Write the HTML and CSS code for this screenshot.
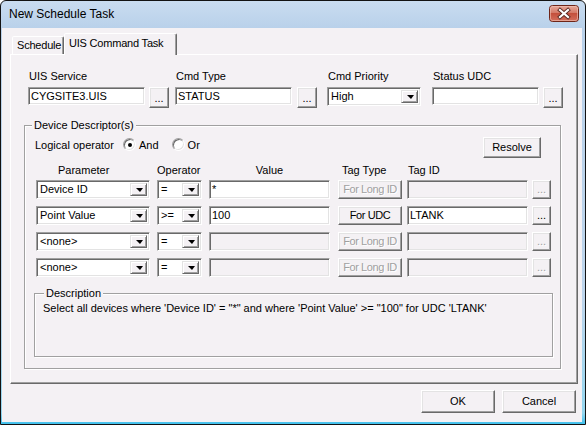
FILE: index.html
```html
<!DOCTYPE html>
<html>
<head>
<meta charset="utf-8">
<link rel="stylesheet" href="styles.css">
</head>
<body>
<div class="window">
  <div class="titlebar">
    <span class="title">New Schedule Task</span>
    <div class="close">
      <svg width="30" height="17" viewBox="0 0 30 17">
        <defs>
          <linearGradient id="cg" x1="0" y1="0" x2="0" y2="1">
            <stop offset="0" stop-color="#e8ab9c"/>
            <stop offset="0.45" stop-color="#d47a68"/>
            <stop offset="0.5" stop-color="#c4503c"/>
            <stop offset="1" stop-color="#d4705e"/>
          </linearGradient>
        </defs>
        <rect x="0.5" y="0.5" width="29" height="16" rx="3" fill="url(#cg)" stroke="#6e2518"/>
        <rect x="1.5" y="1.5" width="27" height="14" rx="2" fill="none" stroke="#f0c4b8" stroke-opacity="0.6"/>
        <path d="M11 5 L19 12 M19 5 L11 12" stroke="#5a2a22" stroke-width="4" stroke-linecap="square"/>
        <path d="M11 5 L19 12 M19 5 L11 12" stroke="#ffffff" stroke-width="2.2" stroke-linecap="square"/>
      </svg>
    </div>
  </div>
  <div class="client">
    <div class="tabs">
      <div class="tab">Schedule</div>
      <div class="tab active">UIS Command Task</div>
    </div>
    <div class="panel">
      <div class="toprow">
        <div class="field f1">
          <label>UIS Service</label>
          <div class="ctl"><div class="edit w117">CYGSITE3.UIS</div><div class="btn dots tall ml4">...</div></div>
        </div>
        <div class="field f2">
          <label>Cmd Type</label>
          <div class="ctl"><div class="edit w117">STATUS</div><div class="btn dots tall ml5">...</div></div>
        </div>
        <div class="field f3">
          <label>Cmd Priority</label>
          <div class="ctl"><div class="combo w94"><span class="ctext">High</span><span class="arrow"></span></div></div>
        </div>
        <div class="field f4">
          <label>Status UDC</label>
          <div class="ctl"><div class="edit w107"></div><div class="btn dots tall ml4">...</div></div>
        </div>
      </div>

      <fieldset class="group devices">
        <legend>Device Descriptor(s)</legend>
        <div class="logic">
          <div class="logic-left">
            <span class="lbl">Logical operator</span>
            <span class="radio on"></span><span class="rtext">And</span>
            <span class="radio"></span><span class="rtext">Or</span>
          </div>
          <div class="btn resolve">Resolve</div>
        </div>

        <div class="hdr">
          <span class="c-param h-param">Parameter</span>
          <span class="c-op">Operator</span>
          <span class="c-val h-val">Value</span>
          <span class="c-type h-type">Tag Type</span>
          <span class="c-id h-id">Tag ID</span>
        </div>

        <div class="rows">
          <div class="row">
            <div class="combo c-param"><span class="ctext">Device ID</span><span class="arrow"></span></div>
            <div class="combo c-op"><span class="ctext">=</span><span class="arrow"></span></div>
            <div class="edit c-val">*</div>
            <div class="btn c-type disabled">For Long ID</div>
            <div class="edit c-id off"></div>
            <div class="btn dots c-dots disabled">...</div>
          </div>
          <div class="row">
            <div class="combo c-param"><span class="ctext">Point Value</span><span class="arrow"></span></div>
            <div class="combo c-op"><span class="ctext">&gt;=</span><span class="arrow"></span></div>
            <div class="edit c-val">100</div>
            <div class="btn c-type">For UDC</div>
            <div class="edit c-id">LTANK</div>
            <div class="btn dots c-dots">...</div>
          </div>
          <div class="row">
            <div class="combo c-param"><span class="ctext">&lt;none&gt;</span><span class="arrow"></span></div>
            <div class="combo c-op"><span class="ctext">=</span><span class="arrow"></span></div>
            <div class="edit c-val off"></div>
            <div class="btn c-type disabled">For Long ID</div>
            <div class="edit c-id off"></div>
            <div class="btn dots c-dots disabled">...</div>
          </div>
          <div class="row">
            <div class="combo c-param"><span class="ctext">&lt;none&gt;</span><span class="arrow"></span></div>
            <div class="combo c-op"><span class="ctext">=</span><span class="arrow"></span></div>
            <div class="edit c-val off"></div>
            <div class="btn c-type disabled">For Long ID</div>
            <div class="edit c-id off"></div>
            <div class="btn dots c-dots disabled">...</div>
          </div>
        </div>

        <fieldset class="group desc">
          <legend>Description</legend>
          <div class="desc-text">Select all devices where 'Device ID' = "*" and where 'Point Value' &gt;= "100" for UDC 'LTANK'</div>
        </fieldset>
      </fieldset>
    </div>
    <div class="buttons">
      <div class="btn big">OK</div>
      <div class="btn big">Cancel</div>
    </div>
  </div>
</div>
</body>
</html>
```

FILE: styles.css
```css
* { box-sizing: border-box; }

body {
  margin: 0;
  background: #ffffff;
  font-family: "Liberation Sans", Arial, sans-serif;
  font-size: 11px;
  color: #000;
}

.window {
  width: 586px;
  height: 425px;
  border: 1px solid #121212;
  border-radius: 6px 6px 0 0;
  padding: 0 3px 2px 1px;
  background: linear-gradient(to bottom, #c9dcf0 0, #b9d1ea 27px, #bdd5ec 300px, #94d6ef 412px, #3fc0ec 423px);
  display: flex;
  flex-direction: column;
  overflow: hidden;
}

.titlebar {
  height: 27px;
  flex: none;
  display: flex;
  align-items: flex-start;
  padding-left: 7px;
}

.title {
  flex: 1;
  font-size: 12px;
  line-height: 14px;
  margin-top: 6px;
}

.close {
  width: 30px;
  height: 17px;
  margin-top: 4px;
  margin-right: 3px;
}
.close svg { display: block; }

.client {
  flex: 1;
  background: #f4f1f4;
  display: flex;
  flex-direction: column;
  padding: 5px 4px 0 8px;
}

/* tabs */
.tabs {
  display: flex;
  align-items: flex-end;
  height: 21px;
  padding-left: 2px;
}

.tab {
  height: 18px;
  padding: 0 3px;
  line-height: 16px;
  border: 1px solid;
  border-bottom: none;
  border-color: #ffffff #696969 transparent #ffffff;
  box-shadow: inset -1px 0 0 #a0a0a0;
  border-radius: 2px 2px 0 0;
  background: #f4f1f4;
  white-space: nowrap;
  letter-spacing: -0.2px;
}
.tab:first-child { width: 52px; padding-left: 4px; }

.tab.active {
  width: 113px;
  height: 22px;
  margin-bottom: -1px;
  position: relative;
  z-index: 1;
  line-height: 18px;
  padding-left: 4px;
}

.panel {
  width: 568px;
  height: 330px;
  border: 1px solid;
  border-color: #ffffff #696969 #696969 #ffffff;
  box-shadow: inset -1px -1px 0 #a0a0a0;
  background: #f4f1f4;
}

/* top row */
.toprow {
  display: flex;
  align-items: flex-start;
  padding: 15px 0 0 17px;
}
.field { display: flex; flex-direction: column; }
.field label {
  height: 13px;
  line-height: 13px;
  margin-bottom: 4px;
  padding-left: 1px;
}
.ctl { display: flex; align-items: flex-start; }
.f1 { margin-right: 6px; }
.f2 { margin-right: 10px; }
.f3 { margin-right: 11px; }

.w117 { width: 117px; }
.w107 { width: 107px; }
.w94 { width: 94px; }
.ml4 { margin-left: 4px; }
.ml5 { margin-left: 5px; }

/* controls */
.edit {
  height: 19px;
  background: #ffffff;
  border: 1px solid;
  border-color: #a0a0a0 #ffffff #ffffff #a0a0a0;
  box-shadow: inset 1px 1px 0 #696969, inset -1px -1px 0 #e3e3e3;
  padding: 0 2px;
  line-height: 17px;
  white-space: nowrap;
  overflow: hidden;
}
.toprow .edit { height: 18px; line-height: 16px; }
.edit.off { background: #f4f1f4; }

.combo {
  height: 19px;
  display: flex;
  align-items: stretch;
  background: #ffffff;
  border: 1px solid;
  border-color: #a0a0a0 #ffffff #ffffff #a0a0a0;
  box-shadow: inset 1px 1px 0 #696969, inset -1px -1px 0 #e3e3e3;
  padding: 2px;
}
.ctext {
  flex: 1;
  line-height: 13px;
  padding-left: 1px;
  white-space: nowrap;
  overflow: hidden;
}
.arrow {
  width: 17px;
  flex: none;
  background: #f4f1f4;
  border: 1px solid;
  border-color: #e3e3e3 #696969 #696969 #e3e3e3;
  box-shadow: inset 1px 1px 0 #fff, inset -1px -1px 0 #a0a0a0;
  display: flex;
  align-items: center;
  justify-content: center;
}
.arrow::after {
  content: "";
  width: 0;
  height: 0;
  border-top: 4px solid #000;
  border-left: 4px solid transparent;
  border-right: 3px solid transparent;
  margin-left: 1px;
}

.btn {
  height: 19px;
  background: #f4f1f4;
  border: 1px solid;
  border-color: #ffffff #696969 #696969 #ffffff;
  box-shadow: inset -1px -1px 0 #a0a0a0, inset 1px 1px 0 #e3e3e3;
  display: flex;
  align-items: center;
  justify-content: center;
  line-height: 13px;
  white-space: nowrap;
}
.btn.dots { width: 20px; align-items: flex-end; padding-bottom: 2px; }
.btn.tall { height: 21px; }
.btn.disabled { color: #a0a0a0; text-shadow: 1px 1px 0 #ffffff; }
.btn.c-type { letter-spacing: -0.4px; padding: 0; }

/* group boxes */
fieldset.group {
  margin: 0;
  padding: 0;
  border: 1px solid #a0a0a0;
  box-shadow: inset 1px 1px 0 #ffffff, 1px 1px 0 #ffffff;
}
fieldset.group legend {
  padding: 0 2px;
  line-height: 13px;
  background: #f4f1f4;
}

.devices {
  width: 537px;
  margin: 11px 0 0 13px !important;
  padding-bottom: 11px !important;
}
.devices > legend { margin-left: 7px; }

.logic {
  display: flex;
  align-items: flex-start;
  margin-top: 5px;
  padding-left: 10px;
  height: 21px;
}
.logic-left {
  display: flex;
  align-items: center;
  padding-top: 1px;
  height: 14px;
}
.lbl { width: 88px; }
.radio {
  width: 13px;
  height: 13px;
  border-radius: 50%;
  border: 1px solid;
  border-color: #a0a0a0 #ffffff #ffffff #a0a0a0;
  box-shadow: inset 1px 1px 0 #696969, inset -1px -1px 0 #e3e3e3;
  background: #ffffff;
  display: flex;
  align-items: center;
  justify-content: center;
}
.radio.on::after {
  content: "";
  width: 4px;
  height: 4px;
  border-radius: 50%;
  background: #000;
}
.rtext { margin-left: 3px; margin-right: 13px; }

.resolve {
  width: 58px;
  height: 21px;
  margin-left: auto;
  margin-right: 19px;
}

.hdr {
  display: flex;
  margin-top: 6px;
  padding-left: 11px;
  height: 13px;
  line-height: 13px;
  white-space: nowrap;
}

.rows {
  display: flex;
  flex-direction: column;
  gap: 7px;
  margin-top: 3px;
  padding-left: 11px;
}
.row { display: flex; align-items: flex-start; }

.c-param { width: 114px; }
.c-op { width: 45px; margin-left: 7px; }
.c-val { width: 121px; margin-left: 7px; }
.c-type { width: 64px; margin-left: 8px; }
.c-id { width: 121px; margin-left: 5px; }
.c-dots { width: 19px !important; margin-left: 4px; }

.h-param { padding-left: 22px; }
.h-val { text-align: center; }
.h-type { padding-left: 4px; }
.h-id { padding-left: 1px; }

.desc {
  width: 519px;
  height: 70px;
  margin: 10px 0 0 9px !important;
}
.desc > legend { margin-left: 9px; }
.desc-text {
  padding: 2px 0 0 8px;
  line-height: 13px;
  white-space: nowrap;
}

/* bottom buttons */
.buttons {
  display: flex;
  justify-content: flex-end;
  gap: 7px;
  margin-top: 6px;
  margin-right: 2px;
}
.btn.big { width: 74px; height: 23px; }
```
